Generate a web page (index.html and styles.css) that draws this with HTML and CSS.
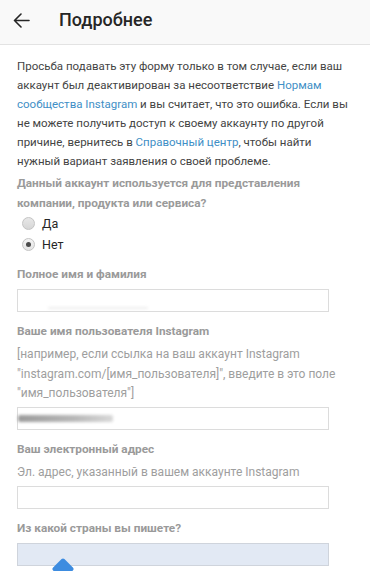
FILE: index.html
```html
<!DOCTYPE html>
<html lang="ru">
<head>
<meta charset="utf-8">
<title>Подробнее</title>
<link rel="stylesheet" href="styles.css">
</head>
<body>
<header class="topbar">
  <svg class="back" width="17" height="15" viewBox="0 0 17 15" aria-hidden="true">
    <path d="M16 7.5H1.5M8 1L1.5 7.5 8 14" fill="none" stroke="#262626" stroke-width="1.6" stroke-linecap="round" stroke-linejoin="round"/>
  </svg>
  <h1 class="title">Подробнее</h1>
</header>
<main class="content">
  <p class="intro">Просьба подавать эту форму только в том случае, если ваш<br>аккаунт был деактивирован за несоответствие <a class="link" href="#">Нормам<br>сообщества Instagram</a> и вы считает, что это ошибка. Если вы<br>не можете получить доступ к своему аккаунту по другой<br>причине, вернитесь в <a class="link" href="#">Справочный центр</a>, чтобы найти<br>нужный вариант заявления о своей проблеме.</p>

  <div class="field field-first">
    <div class="label">Данный аккаунт используется для представления компании, продукта или сервиса?</div>
    <div class="radios">
      <label class="radio"><span class="dot"></span>Да</label>
      <label class="radio"><span class="dot checked"></span>Нет</label>
    </div>
  </div>

  <div class="field">
    <div class="label">Полное имя и фамилия</div>
    <div class="input"><span class="ghost ghost-name"></span></div>
  </div>

  <div class="field">
    <div class="label">Ваше имя пользователя Instagram</div>
    <div class="help">[например, если ссылка на ваш аккаунт Instagram "instagram.com/[имя_пользователя]", введите в это поле "имя_пользователя"]</div>
    <div class="input"><span class="ghost ghost-user"></span></div>
  </div>

  <div class="field">
    <div class="label">Ваш электронный адрес</div>
    <div class="help">Эл. адрес, указанный в вашем аккаунте Instagram</div>
    <div class="input"></div>
  </div>

  <div class="field">
    <div class="label">Из какой страны вы пишете?</div>
    <div class="select"><span class="caret"></span></div>
  </div>
</main>
</body>
</html>
```
FILE: styles.css
```css
html, body {
  margin: 0;
  padding: 0;
  background: #ffffff;
}
body {
  font-family: Roboto, "Noto Sans", "Liberation Sans", sans-serif;
  color: #262626;
  width: 376px;
  height: 571px;
  overflow: hidden;
}
.topbar {
  width: 370px;
  height: 45px;
  box-sizing: border-box;
  background: #f9f9f9;
  border-bottom: 1px solid #e3e3e3;
  display: flex;
  align-items: center;
  padding-left: 13px;
  padding-bottom: 4px;
}
.back {
  display: block;
  flex: none;
}
.title {
  margin: 0 0 0 29px;
  font-size: 18px;
  font-weight: 500;
  color: #262626;
  line-height: 1;
}
.content {
  width: 350px;
  padding: 12px 0 0 17px;
}
.intro {
  margin: 0;
  font-size: 11.5px;
  line-height: 19px;
  color: #444444;
  white-space: nowrap;
}
.link {
  color: #3f8fc6;
  text-decoration: none;
}
.field {
  margin-top: 9.5px;
}
.field-first {
  margin-top: 1.5px;
}
.label {
  font-size: 11.8px;
  font-weight: 700;
  color: #9a9a9a;
  line-height: 20px;
  width: 330px;
}
.radios {
  display: flex;
  flex-direction: column;
  padding: 0 0 0 5px;
}
.radio {
  display: flex;
  align-items: center;
  font-size: 12.5px;
  color: #262626;
  height: 21px;
}
.dot {
  width: 11px;
  height: 11px;
  border-radius: 50%;
  border: 1px solid #c4c4c4;
  background: linear-gradient(#e8e8e8, #d6d6d6);
  margin-right: 7px;
  position: relative;
}
.dot.checked {
  background: linear-gradient(#f4f4f4, #e4e4e4);
}
.dot.checked::after {
  content: "";
  position: absolute;
  left: 3px;
  top: 3px;
  width: 5px;
  height: 5px;
  border-radius: 50%;
  background: #4a4a4a;
}
.help {
  font-size: 12px;
  line-height: 19.5px;
  color: #9e9e9e;
  margin-top: 4px;
  width: 340px;
}
.input {
  width: 312px;
  height: 23px;
  box-sizing: border-box;
  border: 1px solid #dcdcdc;
  background: #fff;
  margin-top: 4.5px;
  position: relative;
}
.help + .input {
  margin-top: 3px;
}
.ghost {
  position: absolute;
  display: block;
  border-radius: 2px;
  filter: blur(1.5px);
}
.ghost-name {
  left: 30px;
  top: 17px;
  width: 100px;
  height: 2px;
  background: #ececec;
}
.ghost-user {
  left: 0;
  top: 7px;
  width: 95px;
  height: 7px;
  background: linear-gradient(90deg, #9a9a9a, #b8b8b8 60%, #d8d8d8);
}
.select {
  width: 312px;
  height: 23px;
  box-sizing: border-box;
  border: 1px solid #cfd4dc;
  background: #e2e9f4;
  margin-top: 4.5px;
  position: relative;
}
.caret {
  position: absolute;
  left: 37px;
  top: 17px;
  width: 16px;
  height: 16px;
  background: #3d8ce0;
  transform: rotate(45deg);
  border-radius: 2px;
}
```
